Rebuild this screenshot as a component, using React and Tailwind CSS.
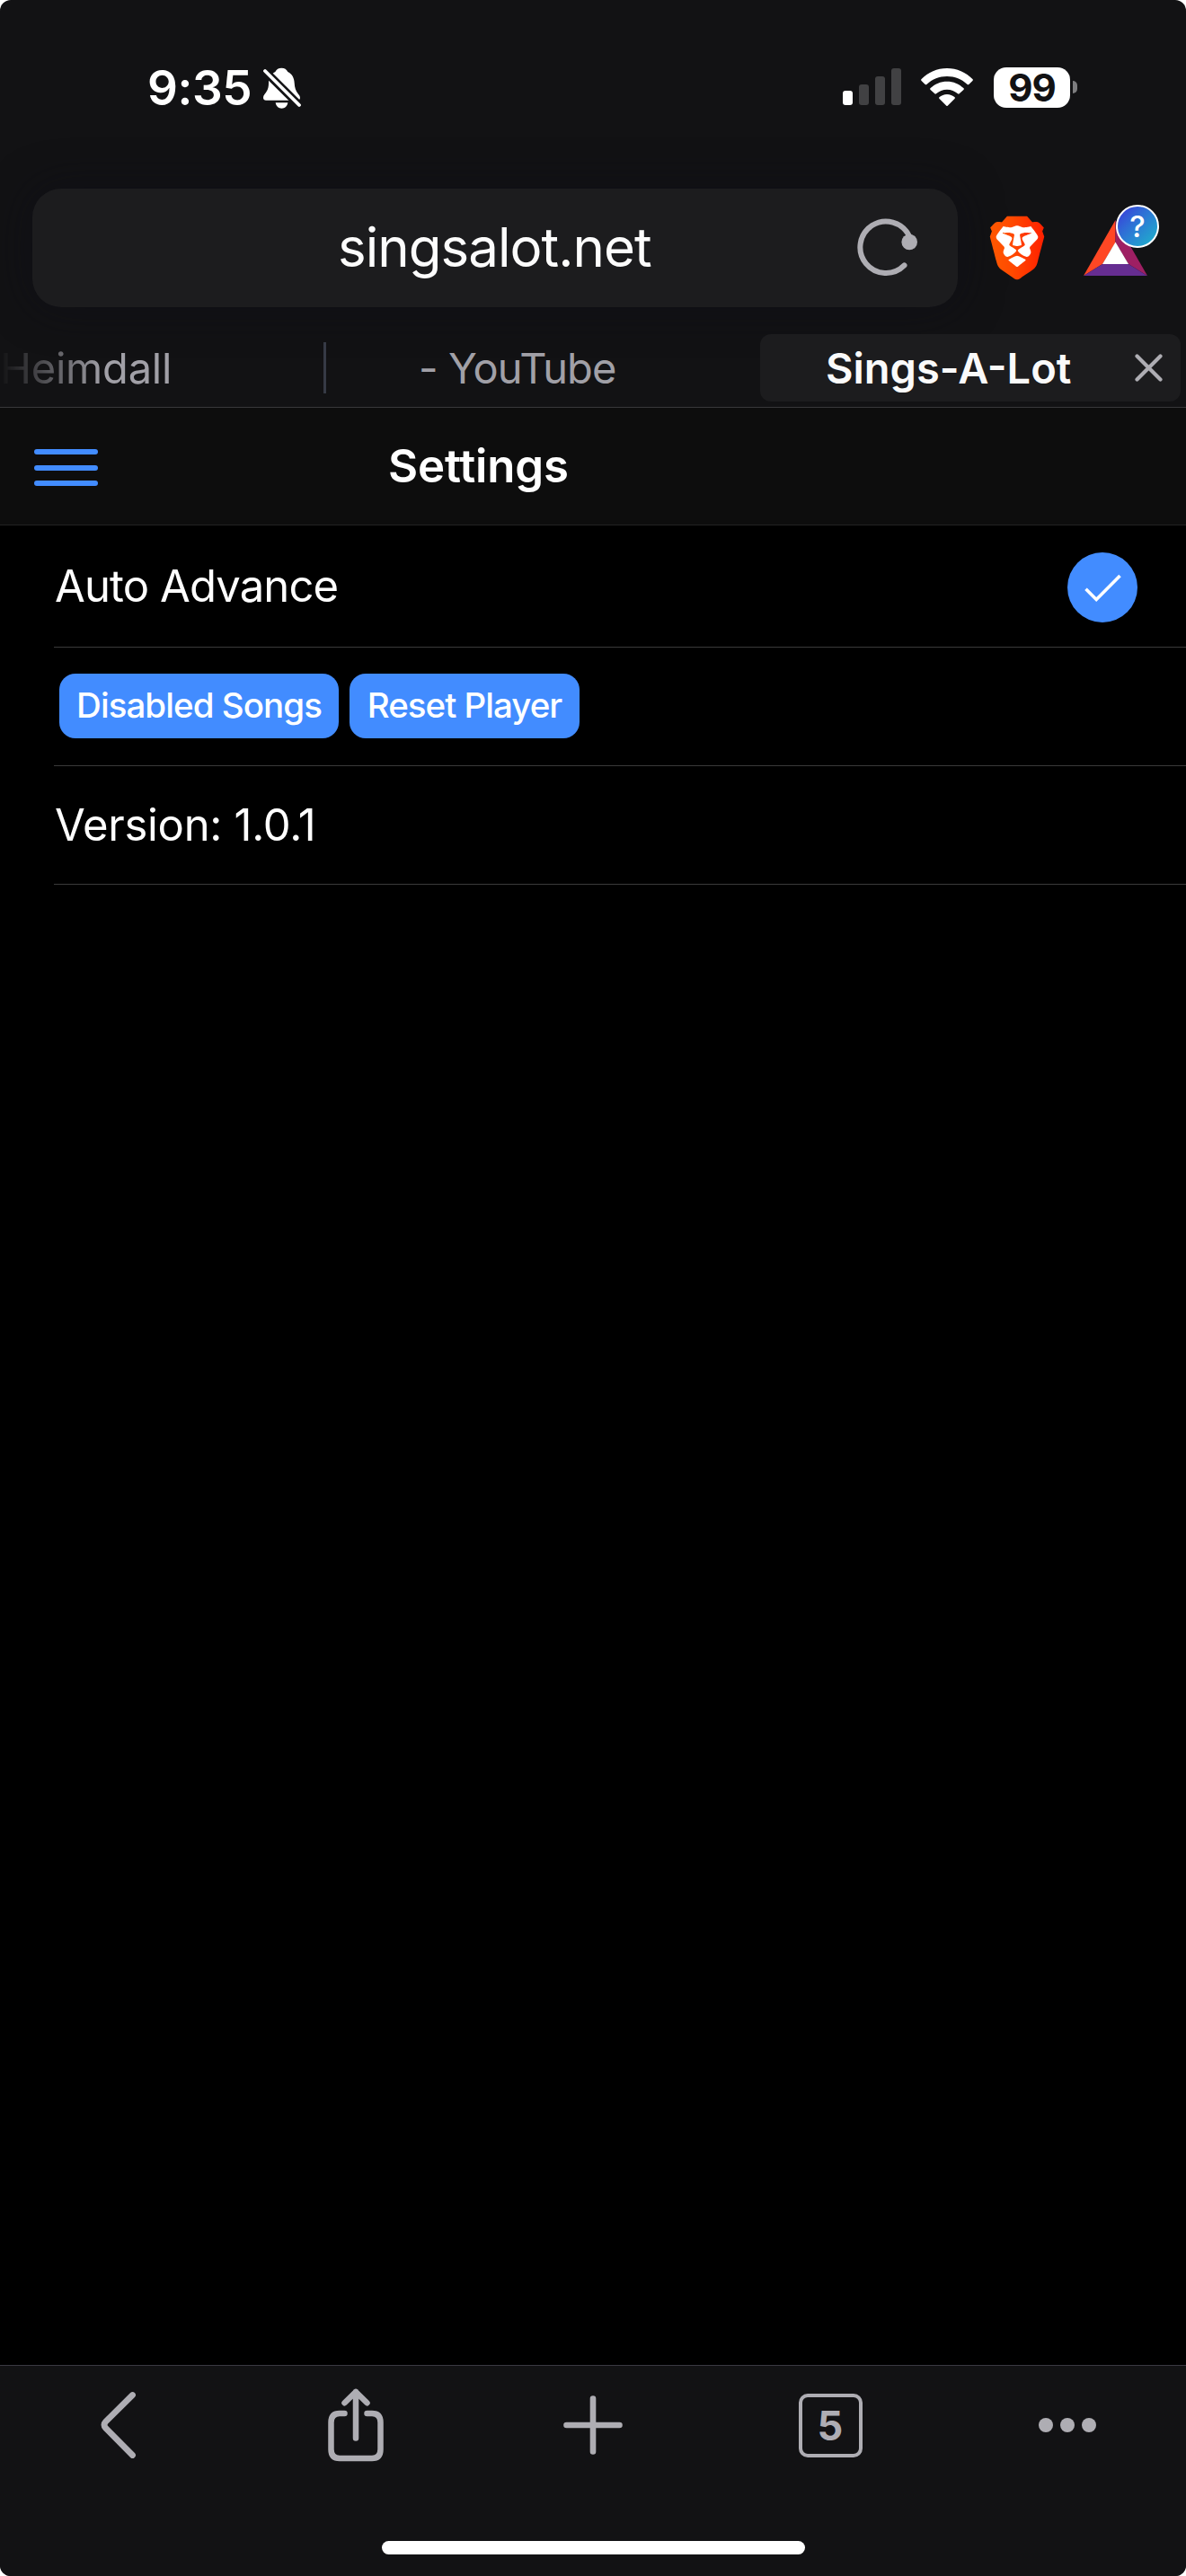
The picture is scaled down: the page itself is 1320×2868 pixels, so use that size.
import React from "react";
import { SiBrave } from "react-icons/si";

function BellSlash() {
  return (
    <svg className="h-[46px] w-[42px]" viewBox="459 75 126 138">
      <mask id="bell-cut" maskUnits="userSpaceOnUse" x="440" y="60" width="160" height="160">
        <rect x="440" y="60" width="160" height="160" fill="white" />
        <path d="M450 73L597 219" stroke="black" strokeWidth="27" />
      </mask>
      <g mask="url(#bell-cut)" fill="white">
        <path d="M520 77C510 77 503 81 499 90C484 97 477 111 477 127C477 143 474 152 465 163C461 168 459 172 459 177C459 182 463 185 468 185H573C578 185 582 182 582 177C582 172 579 168 575 163C567 153 564 143 563 127C562 111 556 97 541 90C537 81 530 77 520 77Z" />
      </g>
      <path d="M500 193H541C539 205 531 212 520.500 212C510 212 502 205 500 193Z" fill="white" />
      <path d="M465 87L579 201" stroke="white" strokeWidth="11.500" strokeLinecap="round" />
    </svg>
  );
}

function SignalBars() {
  return (
    <div className="flex h-[41px] w-[65px] items-end justify-between">
      <div className="h-4 w-[11px] rounded-[3px] bg-white" />
      <div className="h-[23px] w-[11px] rounded-[3px] bg-[#414143]" />
      <div className="h-8 w-[11px] rounded-[3px] bg-[#414143]" />
      <div className="h-[41px] w-[11px] rounded-[3px] bg-[#414143]" />
    </div>
  );
}

function Wifi() {
  return (
    <svg className="h-[42px] w-[58px]" viewBox="314 75 174 126" fill="white">
      <path d="M315 112C338 88 368 75 401 75C434 75 464 88 487 112Q488 114 487 116L474 129Q471 131 469 129C450 111 427 102 401 102C375 102 352 111 333 129Q331 131 328 129L315 116Q314 114 315 112Z" />
      <path d="M345 142C361 127 380 119 401 119C422 119 441 127 457 142Q458 144 457 146L442 160Q440 162 437 160C427 151 415 146 401 146C387 146 375 151 365 160Q362 162 360 160L345 146Q344 144 345 142Z" />
      <path d="M375 172C382 166 391 162 401 162C411 162 420 166 427 172Q428 174 427 176L403 200Q401 202 399 200L375 176Q374 174 375 172Z" />
    </svg>
  );
}

function StatusBar() {
  return (
    <div className="flex h-[210px] items-start pt-[75px] pr-[121px] pl-[164px] text-white">
      <div className="w-[129px] text-[53px] leading-[46px] font-semibold tracking-[-0.4px]">9:35</div>
      <BellSlash />
      <div className="ml-auto flex h-[43px] items-center">
        <SignalBars />
        <div className="ml-[22px] flex"><Wifi /></div>
        <div className="mt-[1px] ml-[23px] h-[45px] w-[85px] rounded-[14px] bg-white text-center text-[42px] leading-[46px] font-bold tracking-[-1px] text-[#121214]">
          99
        </div>
        <div className="mt-[1px] ml-[3px] h-[14px] w-[5px] rounded-r-full bg-[#7d7d7f]" />
      </div>
    </div>
  );
}

function Reload() {
  return (
    <svg className="h-[64px] w-[67px]" viewBox="954 242.500 67 64">
      <path d="M1011.800 262A28.700 28.700 0 1 0 1006.500 294.900" fill="none" stroke="#aeadb3" strokeWidth="6" strokeLinecap="round" />
      <circle cx="1012.200" cy="269" r="8.800" fill="#aeadb3" />
    </svg>
  );
}

function BraveLogo() {
  return (
    <svg className="h-[72px] w-[62px]" viewBox="-1 0 62 72">
      <defs>
        <linearGradient id="brave" x1="0" x2="1" y1="0" y2="0">
          <stop offset="0.100" stopColor="#ff5500" />
          <stop offset="0.400" stopColor="#ff4a00" />
          <stop offset="1" stopColor="#ff2000" />
        </linearGradient>
      </defs>
      <path d="M12 9H48L56 24L46 46L30 60L14 46L4 24Z" fill="white" />
      <SiBrave x="-5.500" y="0.500" width="71" height="71" size={71} fill="url(#brave)" />
    </svg>
  );
}

function BatLogo() {
  return (
    <div className="relative ml-[43px] h-[62px] w-[71px]">
      <svg className="h-[62px] w-[71px]" viewBox="0 0 71 62">
        <path d="M35.500 0V25L21 49L0 62Z" fill="#ff4724" />
        <path d="M35.500 0V25L50 49L71 62Z" fill="#9e1f63" />
        <path d="M0 62L21 49H50L71 62Z" fill="#662d91" />
        <path d="M35.500 24.500L50 49H21Z" fill="white" />
      </svg>
      <div className="absolute top-[-17px] left-[36px] h-12 w-12 rounded-full border-2 border-white bg-linear-to-br from-[#3a2fd9] to-[#1fb5c9] text-center text-[33px] leading-[45px] font-medium text-white">
        ?
      </div>
    </div>
  );
}

function AddressRow() {
  return (
    <div className="flex h-[132px] items-center pl-9">
      <div className="flex h-full w-[1030px] items-center rounded-[32px] bg-[#1c1c1e] pr-[45px] pl-[340px] shadow-[0_0_48px_rgba(14,14,24,0.6)]">
        <span className="-mt-[2px] text-[60px] leading-[72px] tracking-[-0.97px] whitespace-nowrap text-[#fcfcfc]">singsalot.net</span>
        <div className="-mt-[2px] ml-auto"><Reload /></div>
      </div>
      <div className="ml-[35px]"><BraveLogo /></div>
      <BatLogo />
    </div>
  );
}

function TabStrip() {
  return (
    <div className="mt-[30px] flex h-[82px] items-start border-b border-[#38383b] text-[47px] leading-[75px] whitespace-nowrap text-[#a1a0a7]">
      <div className="w-[360px] tracking-[-0.2px] [mask-image:linear-gradient(to_right,transparent,black_115px)]">Heimdall</div>
      <div className="mt-[9px] h-[57px] w-[3px] bg-[#363a45]" />
      <div className="w-[483px] pl-[103px] tracking-[-0.9px]">- YouTube</div>
      <div className="flex h-[75px] w-[468px] items-center rounded-[12px] bg-[#1c1c1e] pr-5 pl-[73px] font-semibold text-[#fafafa]">
        Sings-A-Lot
        <svg className="ml-auto h-[31px] w-[31px]" viewBox="0 0 31 31" stroke="#aeadb3" strokeWidth="4.200" strokeLinecap="round">
          <path d="M2.500 2.500L28.500 28.500M28.500 2.500L2.500 28.500" />
        </svg>
      </div>
    </div>
  );
}

function NavBar() {
  return (
    <div className="flex h-[131px] items-center border-b border-[#232323] bg-[#0d0d0d] pl-[38px]">
      <div className="mt-[3px] flex h-[41px] w-[71px] flex-col justify-between">
        <div className="h-[6px] rounded-full bg-[#428cff]" />
        <div className="h-[6px] rounded-full bg-[#428cff]" />
        <div className="h-[6px] rounded-full bg-[#428cff]" />
      </div>
      <h1 className="ml-[323px] text-[51px] leading-[60px] font-semibold tracking-[-0.17px] text-white">Settings</h1>
    </div>
  );
}

function Badge({ className, children }) {
  return (
    <button className={"h-[72px] rounded-[18px] bg-[#428cff] text-center text-[38.500px] font-medium whitespace-nowrap text-white " + className}>
      {children}
    </button>
  );
}

function SettingsList() {
  return (
    <div className="grow bg-black pl-[60px] text-[49px] text-white">
      <div className="flex h-[136px] items-center justify-between border-b border-[#3a3a3a] pr-[54px] pl-[1px]">
        <span className="tracking-[-0.89px]">Auto Advance</span>
        <div className="mt-[3px] h-[78px] w-[78px] rounded-full bg-[#428cff]">
          <svg className="h-[78px] w-[78px]" viewBox="0 0 78 78" fill="none" stroke="white" strokeWidth="3.600">
            <path d="M20.500 40.800L32.200 52.500L58.500 26" />
          </svg>
        </div>
      </div>
      <div className="flex h-[132px] items-center gap-3 border-b border-[#3a3a3a] pb-[1px] pl-[6px]">
        <Badge className="w-[311px] tracking-[-0.95px]">Disabled Songs</Badge>
        <Badge className="w-[256px] tracking-[-1px]">Reset Player</Badge>
      </div>
      <div className="flex h-[132px] items-center border-b border-[#3a3a3a] pl-[1px] tracking-[-0.3px]">Version: 1.0.1</div>
    </div>
  );
}

function Toolbar() {
  return (
    <div className="flex h-[235px] flex-col border-t border-[#3a3942] bg-[#121214]">
      <div className="grid h-[132px] grid-cols-5 place-items-center">
        <svg className="h-[76px] w-[40px]" viewBox="0 0 40 76" fill="none" stroke="#aeadb3" strokeWidth="6.800" strokeLinecap="round">
          <path d="M35.500 4.500L5.700 34Q2.400 37.700 5.700 41.400L35.500 71.500" />
        </svg>
        <svg className="h-[82px] w-[62px]" viewBox="0 0 62 82" fill="none" stroke="#aeadb3" strokeWidth="6.500" strokeLinecap="round" strokeLinejoin="round">
          <path d="M18.500 28H13Q3.500 28 3.500 38V68Q3.500 78 13 78H49Q58.500 78 58.500 68V38Q58.500 28 49 28H43.500" />
          <path d="M31 4V55.500M18.500 16.300L31 4L43.500 16.300" />
        </svg>
        <svg className="h-[66px] w-[66px]" viewBox="0 0 66 66" stroke="#aeadb3" strokeWidth="6.600" strokeLinecap="round">
          <path d="M3.500 33H62.500M33 3.500V62.500" />
        </svg>
        <div className="h-[71px] w-[71px] rounded-[10px] border-4 border-[#aeadb3] text-center text-[45px] leading-[64px] font-bold text-[#aeadb3]">5</div>
        <div className="flex gap-2">
          <div className="h-4 w-4 rounded-full bg-[#aeadb3]" />
          <div className="h-4 w-4 rounded-full bg-[#aeadb3]" />
          <div className="h-4 w-4 rounded-full bg-[#aeadb3]" />
        </div>
      </div>
      <div className="mx-auto mt-[63px] h-[15px] w-[471px] rounded-full bg-white" />
    </div>
  );
}

export default function App() {
  return (
    <div className="bg-white">
      <div className="flex h-[2868px] w-[1320px] flex-col overflow-hidden rounded-[12px] bg-[#121214] font-['Inter',sans-serif]">
        <StatusBar />
        <AddressRow />
        <TabStrip />
        <NavBar />
        <SettingsList />
        <Toolbar />
      </div>
    </div>
  );
}
